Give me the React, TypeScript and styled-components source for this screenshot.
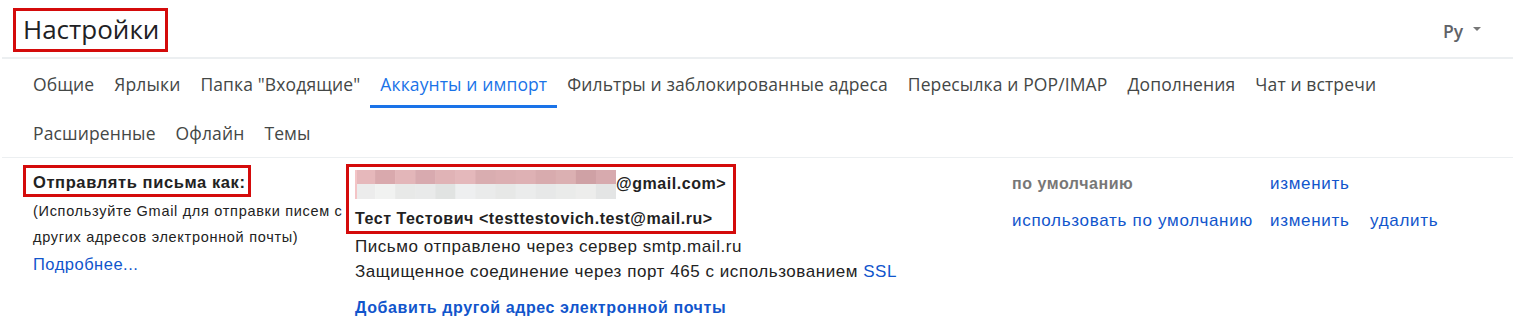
import React from "react";
import styled, { createGlobalStyle } from "styled-components";

const Global = createGlobalStyle`
  html, body { margin: 0; padding: 0; background: #fff; }
  body { font-family: "Liberation Sans", Arial, sans-serif; color: #222; }
`;

const Page = styled.div`
  width: 1515px;
  padding: 0 2px;
  box-sizing: border-box;
`;

const Header = styled.header`
  display: flex;
  align-items: flex-start;
  justify-content: space-between;
  height: 57px;
  border-bottom: 2px solid #eceff1;
  box-sizing: content-box;
`;

const Marked = styled.div`
  border: 3px solid #d40b0b;
  box-sizing: border-box;
`;

const TitleBox = styled(Marked)`
  margin: 8px 0 0 11px;
  height: 44px;
  padding: 0 6px 2px 7px;
  display: flex;
  align-items: center;
`;

const Title = styled.h1`
  margin: 0;
  font-family: "Open Sans", sans-serif;
  font-weight: 400;
  font-size: 26px;
  color: #202124;
`;

const Lang = styled.div`
  display: flex;
  align-items: center;
  gap: 10px;
  margin: 19px 32px 0 0;
  font-family: "Open Sans", sans-serif;
  font-weight: 600;
  font-size: 17.5px;
  color: #5f6368;
`;

const Caret = styled.span`
  width: 0;
  height: 0;
  border-left: 4px solid transparent;
  border-right: 4px solid transparent;
  border-top: 4px solid #777;
  margin-top: -5px;
`;

const Tabs = styled.nav`
  display: flex;
  flex-wrap: wrap;
  padding-left: 21px;
  border-bottom: 1px solid #eceff1;
`;

const Tab = styled.a<{ $active?: boolean }>`
  display: flex;
  align-items: center;
  height: 49px;
  padding: 3px 10px 0;
  box-sizing: border-box;
  font-family: "Open Sans", sans-serif;
  font-size: 17.5px;
  letter-spacing: 0.12px;
  color: ${(p) => (p.$active ? "#1a73e8" : "#444746")};
  border-bottom: 3px solid ${(p) => (p.$active ? "#1a73e8" : "transparent")};
  cursor: pointer;
  white-space: nowrap;
`;

const Section = styled.section`
  display: flex;
  padding-top: 7px;
`;

const LeftCol = styled.div`
  width: 323px;
  padding-left: 21px;
  box-sizing: content-box;
`;

const LabelBox = styled(Marked)`
  display: inline-flex;
  align-items: center;
  height: 32px;
  padding: 2px 2px 0 7px;
`;

const Label = styled.span`
  font-weight: 700;
  font-size: 16.5px;
  letter-spacing: 0.6px;
  color: #222;
  white-space: nowrap;
`;

const Hint = styled.div`
  padding: 1px 0 0 10px;
  font-size: 14.5px;
  letter-spacing: 0.7px;
  line-height: 26px;
  color: #222;
  white-space: nowrap;
`;

const Link = styled.a<{ $bold?: boolean }>`
  color: #15c;
  font-weight: ${(p) => (p.$bold ? 700 : 400)};
  text-decoration: none;
  cursor: pointer;
`;

const More = styled.div`
  padding-left: 10px;
  font-size: 16.5px;
  letter-spacing: 0.5px;
  line-height: 26px;
  margin-top: 1px;
`;

const MidCol = styled.div`
  width: 666px;
`;

const AccountsBox = styled(Marked)`
  display: inline-flex;
  flex-direction: column;
  width: 390px;
  padding: 2px 6px 0;
  height: 70px;
  margin-top: -1px;
`;

const AccountRow = styled.div<{ $pad?: number }>`
  display: flex;
  align-items: center;
  font-weight: 700;
  font-size: 16px;
  letter-spacing: 0.55px;
  height: ${(p) => (p.$pad ? 24 + p.$pad : 30)}px;
  padding-top: ${(p) => p.$pad ?? 0}px;
  box-sizing: border-box;
  white-space: nowrap;
`;

const InfoLine = styled.div`
  font-size: 17px;
  letter-spacing: 0.55px;
  line-height: 25px;
  padding-left: 9px;
  white-space: nowrap;
  &:first-of-type {
    margin-top: 1px;
  }
`;

const AddLine = styled.div`
  font-size: 16px;
  letter-spacing: 0.6px;
  line-height: 24px;
  padding-left: 9px;
  margin-top: 12px;
  white-space: nowrap;
`;

const Actions = styled.div`
  display: grid;
  grid-template-columns: 258px 100px auto;
  grid-auto-rows: 37px;
  align-items: center;
  font-size: 17px;
  letter-spacing: 0.7px;
  white-space: nowrap;
`;

const DefaultTag = styled.span`
  font-weight: 700;
  font-size: 16px;
  letter-spacing: 0.55px;
  color: #777;
`;

const Mosaic = () => {
  const top = ["#e6b8bb", "#d9a9ad", "#e3b6b9", "#d8aaaf", "#e0b3b6", "#e4b8bb", "#d9adb0", "#dcafb2", "#deb1b4", "#d8abae", "#dbb0b2", "#cfa1a5", "#d7aaae"];
  const bottom = ["#ececec", "#f1f2f1", "#e8e9e8", "#e9eaea", "#e1e3e2", "#eeeff0", "#eaebeb", "#e7e8e7", "#ebecec", "#e7e8e8", "#eaebea", "#ededec", "#e4e5e5"];
  const w = 261 / top.length;
  return (
    <svg width="261" height="29" viewBox="0 0 261 29" aria-hidden="true">
      {top.map((c, i) => (
        <rect key={"t" + i} x={i * w} y={0} width={w + 0.5} height={14} fill={c} />
      ))}
      {bottom.map((c, i) => (
        <rect key={"b" + i} x={i * w} y={14} width={w + 0.5} height={15} fill={c} />
      ))}
      <rect x={0} y={0} width={2} height={29} fill="#f4c4c6" />
    </svg>
  );
};

const tabs = [
  "Общие",
  "Ярлыки",
  'Папка "Входящие"',
  "Аккаунты и импорт",
  "Фильтры и заблокированные адреса",
  "Пересылка и POP/IMAP",
  "Дополнения",
  "Чат и встречи",
  "Расширенные",
  "Офлайн",
  "Темы",
];

export default function App() {
  return (
    <>
      <Global />
      <Page>
        <Header>
          <TitleBox>
            <Title>Настройки</Title>
          </TitleBox>
          <Lang>
            Ру <Caret />
          </Lang>
        </Header>
        <Tabs>
          {tabs.map((t) => (
            <Tab key={t} $active={t === "Аккаунты и импорт"}>
              {t}
            </Tab>
          ))}
        </Tabs>
        <Section>
          <LeftCol>
            <LabelBox>
              <Label>Отправлять письма как:</Label>
            </LabelBox>
            <Hint>
              (Используйте Gmail для отправки писем с
              <br />
              других адресов электронной почты)
            </Hint>
            <More>
              <Link>Подробнее...</Link>
            </More>
          </LeftCol>
          <MidCol>
            <AccountsBox>
              <AccountRow>
                <Mosaic />
                <span>@gmail.com&gt;</span>
              </AccountRow>
              <AccountRow $pad={8}>Тест Тестович &lt;testtestovich.test@mail.ru&gt;</AccountRow>
            </AccountsBox>
            <InfoLine>Письмо отправлено через сервер smtp.mail.ru</InfoLine>
            <InfoLine>
              Защищенное соединение через порт 465 с использованием <Link>SSL</Link>
            </InfoLine>
            <AddLine>
              <Link $bold>Добавить другой адрес электронной почты</Link>
            </AddLine>
          </MidCol>
          <Actions>
            <DefaultTag>по умолчанию</DefaultTag>
            <Link>изменить</Link>
            <span />
            <Link>использовать по умолчанию</Link>
            <Link>изменить</Link>
            <Link>удалить</Link>
          </Actions>
        </Section>
      </Page>
    </>
  );
}
